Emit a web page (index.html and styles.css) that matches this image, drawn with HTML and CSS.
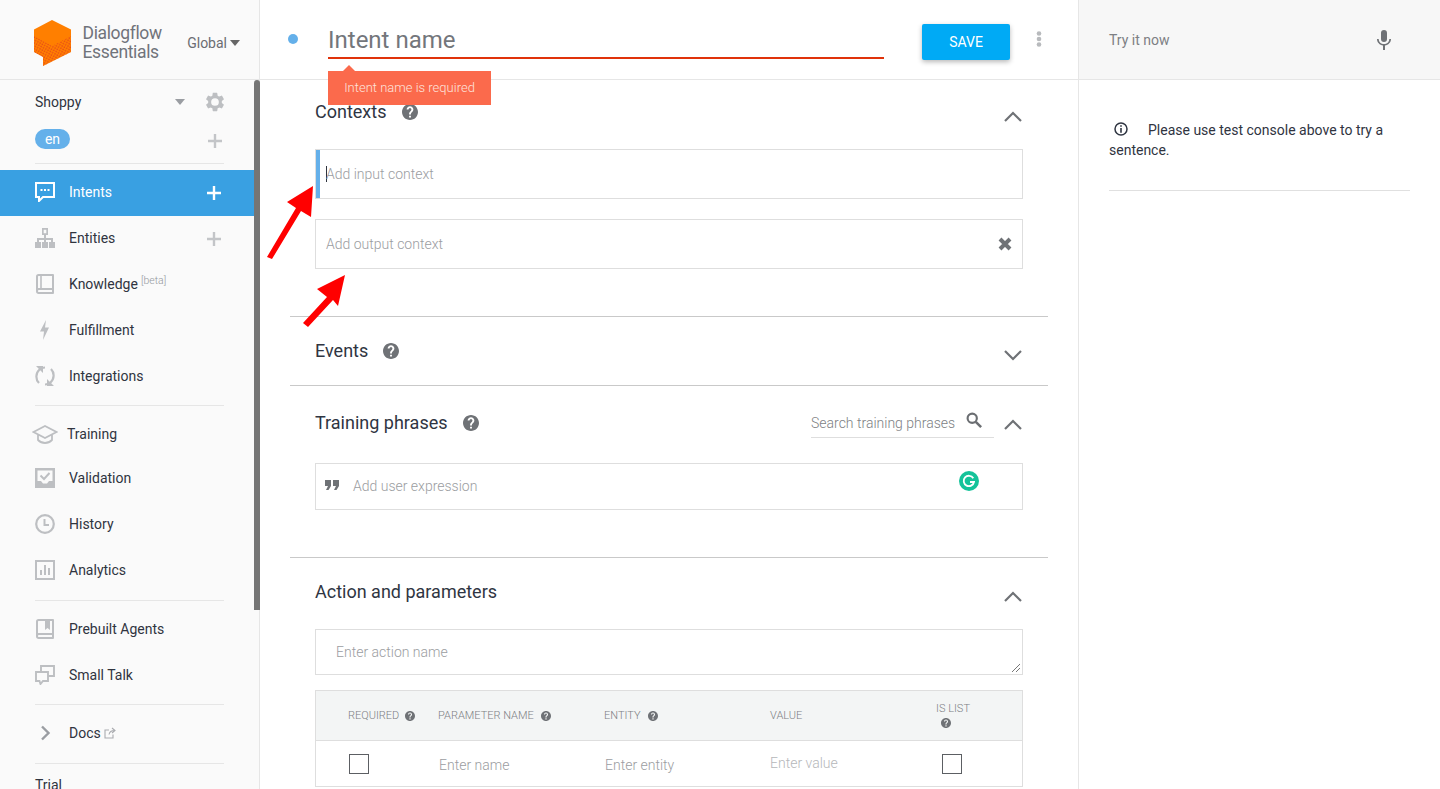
FILE: index.html
```html
<!DOCTYPE html>
<html lang="en">
<head>
<meta charset="utf-8">
<title>Dialogflow Essentials</title>
<link rel="stylesheet" href="styles.css">
</head>
<body>
<svg class="defs" width="0" height="0" aria-hidden="true">
  <defs>
    <symbol id="help" viewBox="2 2 20 20"><path d="M12 2C6.48 2 2 6.48 2 12s4.48 10 10 10 10-4.48 10-10S17.52 2 12 2zm1.2 17h-2.4v-2.4h2.4V19zm2.07-7.75l-.9.92c-.92.73-1.17 1.33-1.17 2.83h-2.4v-.5c0-1.1.45-2.1 1.17-2.83l1.24-1.26c.37-.36.59-.86.59-1.41 0-1.1-.9-2-1.8-2s-1.8.9-1.8 2H7.8c0-2.21 1.99-4.2 4.2-4.2s4.2 1.99 4.2 4.2c0 .88-.36 1.68-.93 2.25z"/></symbol>
    <symbol id="chev-up" viewBox="0 0 18 11"><path d="M1 10l8-8 8 8" fill="none" stroke="currentColor" stroke-width="2.2"/></symbol>
    <symbol id="chev-down" viewBox="0 0 18 11"><path d="M1 1l8 8 8-8" fill="none" stroke="currentColor" stroke-width="2.2"/></symbol>
    <symbol id="plus" viewBox="0 0 14 14"><path d="M7 0v14M0 7h14" fill="none" stroke="currentColor" stroke-width="2.4"/></symbol>
    <pattern id="dots" width="2.6" height="2.6" patternUnits="userSpaceOnUse" patternTransform="rotate(28)"><circle cx="1" cy="1" r=".72" fill="#e2401c"/></pattern>
  </defs>
</svg>
<div class="app">
  <aside class="sidebar">
    <div class="brand">
      <svg class="logo" viewBox="34 20 37 46" width="37" height="46">
        <path d="M52 20l19 9.500V52L43 66v-9l-9-5V29.500z" fill="#ff7f00"/>
        <path d="M34 36l18 10 19-10v16L43 66v-9l-9-5z" fill="url(#dots)"/>
      </svg>
      <div class="brand-name">Dialogflow<br>Essentials</div>
      <div class="region">Global<span class="caret"></span></div>
    </div>
    <div class="side-scroll">
      <div class="agent-row"><span class="agent-name">Shoppy</span><span class="caret caret-light"></span>
        <svg class="gear" viewBox="0 0 24 24" width="22" height="22"><path fill="#bdbfc2" fill-rule="evenodd" d="M19.430 12.980c.04-.32.07-.64.07-.98s-.03-.66-.07-.98l2.110-1.650c.19-.15.24-.42.12-.64l-2-3.460c-.12-.22-.39-.3-.61-.22l-2.490 1c-.52-.4-1.080-.73-1.690-.98l-.38-2.650A.488.488 0 0 0 14 2h-4c-.25 0-.46.18-.49.420l-.38 2.650c-.61.25-1.170.59-1.690.98l-2.490-1c-.23-.09-.49 0-.61.22l-2 3.460c-.13.22-.07.49.12.64l2.110 1.650c-.04.32-.07.65-.07.98s.03.66.07.98l-2.110 1.650c-.19.15-.24.42-.12.64l2 3.460c.12.22.39.3.61.22l2.490-1c.52.4 1.080.73 1.690.98l.38 2.650c.03.24.24.42.49.42h4c.25 0 .46-.18.49-.42l.38-2.650c.61-.25 1.170-.59 1.690-.98l2.490 1c.23.09.49 0 .61-.22l2-3.460c.12-.22.07-.49-.12-.64l-2.110-1.650zM12 16.200a4.200 4.200 0 1 1 0-8.400 4.200 4.200 0 0 1 0 8.400z"/></svg>
      </div>
      <div class="lang-row"><span class="lang-pill">en</span><svg class="plus plus-lang"><use href="#plus"/></svg></div>
      <div class="rule rule-top"></div>

      <div class="nav-item active">
        <svg class="nav-icon" viewBox="0 0 20 20"><path d="M1 1h18v14H8l-4 4v-4H1z" fill="none" stroke="#fff" stroke-width="2"/><path d="M5.500 7h2v2h-2zM9 7h2v2H9zM12.500 7h2v2h-2z" fill="#fff"/></svg>
        <span>Intents</span><svg class="plus"><use href="#plus"/></svg>
      </div>
      <div class="nav-item">
        <svg class="nav-icon" viewBox="0 0 20 20"><path fill="#bdbfc2" fill-rule="evenodd" d="M7 0h6v7h-2v3h7v4h2v6h-6v-6h2v-2h-5v2h2v6H7v-6h2v-2H4v2h2v6H0v-6h2v-4h7V7H7zM8.700 1.700v3.600h2.600V1.700z"/></svg>
        <span>Entities</span><svg class="plus"><use href="#plus"/></svg>
      </div>
      <div class="nav-item">
        <svg class="nav-icon" viewBox="0 0 20 20"><path fill="none" stroke="#bdbfc2" stroke-width="2" stroke-linejoin="round" d="M2 17V2.500C2 1.700 2.700 1 3.500 1H18v18H3.500C2.700 19 2 18.300 2 17.500S2.700 15 3.500 15H18"/><path fill="none" stroke="#bdbfc2" stroke-width="1.600" d="M6 1v14"/></svg>
        <span>Knowledge<sup class="beta">[beta]</sup></span>
      </div>
      <div class="nav-item">
        <svg class="nav-icon" viewBox="0 0 20 20"><path fill="#bdbfc2" d="M11 0L5 11.500h4L8 20l6-12.500h-4z"/></svg>
        <span>Fulfillment</span>
      </div>
      <div class="nav-item">
        <svg class="nav-icon" viewBox="0 0 20 20"><path fill="none" stroke="#bdbfc2" stroke-width="2.200" d="M4 17C.5 13.500.300 7.500 4.500 3.500 6 2 8 1.500 10 1.500M16 3c3.500 3.500 3.700 9.500-.5 13.500-1.500 1.500-3.500 2-5.500 2"/><path fill="#bdbfc2" d="M1 0h7v7zM19 20h-7v-7z"/></svg>
        <span>Integrations</span>
      </div>
      <div class="rule rule-a"></div>
      <div class="nav-item nav-tight nav-training">
        <svg class="nav-icon icon-wide" viewBox="0 0 26 20"><path fill="none" stroke="#bdbfc2" stroke-width="1.800" d="M1.500 8L13 2l11.500 6L13 14zM6 11v5c2 2 4.500 3 7 3s5-1 7-3v-5"/></svg>
        <span>Training</span>
      </div>
      <div class="nav-item">
        <svg class="nav-icon" viewBox="0 0 20 20"><path fill="#bdbfc2" d="M0 0h20v20H0zM2.500 2.500V13H6l2 2.500h4l2-2.500h3.500V2.500z"/><path fill="none" stroke="#bdbfc2" stroke-width="2" d="M5.500 7.500L9 11l5.500-6"/></svg>
        <span>Validation</span>
      </div>
      <div class="nav-item">
        <svg class="nav-icon" viewBox="0 0 20 20"><circle cx="10" cy="10" r="8.800" fill="none" stroke="#bdbfc2" stroke-width="2.200"/><path fill="none" stroke="#bdbfc2" stroke-width="2" d="M9.500 5v6H14"/></svg>
        <span>History</span>
      </div>
      <div class="nav-item">
        <svg class="nav-icon" viewBox="0 0 20 20"><path fill="none" stroke="#bdbfc2" stroke-width="2" d="M1 1h18v18H1z"/><path fill="#bdbfc2" d="M5 10h2v5H5zM9 5h2v10H9zM13 8h2v7h-2z"/></svg>
        <span>Analytics</span>
      </div>
      <div class="rule rule-b"></div>
      <div class="nav-item">
        <svg class="nav-icon" viewBox="0 0 20 20"><path fill="none" stroke="#bdbfc2" stroke-width="2" stroke-linejoin="round" d="M2 17V2.500C2 1.700 2.700 1 3.500 1H18v18H3.500C2.700 19 2 18.300 2 17.500S2.700 15 3.500 15H18"/><path fill="#bdbfc2" d="M10 1h5v10l-2.500-2L10 11z"/></svg>
        <span>Prebuilt Agents</span>
      </div>
      <div class="nav-item">
        <svg class="nav-icon" viewBox="0 0 20 20"><path fill="none" stroke="#bdbfc2" stroke-width="1.900" d="M1 7h12v9H8l-2.500 3-1-3H1zM6 7V1h13v10h-6"/></svg>
        <span>Small Talk</span>
      </div>
      <div class="rule rule-c"></div>
      <div class="nav-item">
        <svg class="nav-icon" viewBox="0 0 20 20"><path fill="none" stroke="#9a9da2" stroke-width="2.400" d="M7 3.500l6.500 6.500L7 16.500"/></svg>
        <span>Docs</span>
        <svg class="ext" viewBox="0 0 12 12" width="12" height="12"><path fill="none" stroke="#a9abaf" stroke-width="1.100" d="M9 7.500V11H1V3h4M5 7.500C5.500 5 7 3.500 10.500 3.500M8 1l3 2.500L8 6"/></svg>
      </div>
      <div class="rule rule-d"></div>
      <div class="trial">Trial</div>
      <div class="scrollbar"></div>
    </div>
  </aside>

  <main class="main">
    <header class="main-head">
      <span class="status-dot"></span>
      <div class="name-field"><span class="name-text">Intent name</span></div>
      <button class="save">SAVE</button>
      <svg class="kebab" viewBox="0 0 6 16" width="6" height="16"><circle cx="3" cy="2.500" r="2.300"/><circle cx="3" cy="8" r="2.300"/><circle cx="3" cy="13.500" r="2.300"/></svg>
      <div class="tooltip">Intent name is required</div>
    </header>

    <div class="sections">
      <section class="sec sec-contexts">
        <div class="sec-head">
          <h2 class="sec-title">Contexts</h2><svg class="help help-l"><use href="#help"/></svg>
          <svg class="chev"><use href="#chev-up"/></svg>
        </div>
        <div class="field field-ctx field-focus"><span class="caret-bar"></span><span class="ph">Add input context</span></div>
        <div class="field field-ctx"><span class="ph">Add output context</span>
          <svg class="clear" viewBox="0 0 14 14" width="14" height="14"><path d="M2 2l10 10M12 2L2 12" stroke="#6f7276" stroke-width="4" fill="none"/></svg>
        </div>
      </section>

      <section class="sec sec-events">
        <div class="sec-head">
          <h2 class="sec-title">Events</h2><svg class="help help-m"><use href="#help"/></svg>
          <svg class="chev"><use href="#chev-down"/></svg>
        </div>
      </section>

      <section class="sec sec-training">
        <div class="sec-head">
          <h2 class="sec-title">Training phrases</h2><svg class="help help-t"><use href="#help"/></svg>
          <div class="search"><span>Search training phrases</span>
            <svg viewBox="0 0 18 18" width="16" height="16"><circle cx="7" cy="7" r="5.200" fill="none" stroke="#6b6e72" stroke-width="2.400"/><path d="M11 11l6 6" stroke="#6b6e72" stroke-width="2.800"/></svg>
          </div>
          <svg class="chev chev-search"><use href="#chev-up"/></svg>
        </div>
        <div class="field field-expr">
          <svg class="quote" viewBox="0 0 14 10" width="14" height="10"><path fill="#6f7276" d="M0 0h6v6L3.500 10H1l2-4H0zM8 0h6v6l-2.500 4H9l2-4H8z"/></svg>
          <span class="ph">Add user expression</span>
          <svg class="grammarly" viewBox="0 0 20 20" width="20" height="20"><circle cx="10" cy="10" r="10" fill="#15c39a"/><path d="M14.300 7.200A5.200 5.200 0 1 0 15 11h-4" fill="none" stroke="#fff" stroke-width="1.800"/></svg>
        </div>
      </section>

      <section class="sec sec-action">
        <div class="sec-head">
          <h2 class="sec-title">Action and parameters</h2>
          <svg class="chev"><use href="#chev-up"/></svg>
        </div>
        <div class="field field-action"><span class="ph">Enter action name</span>
          <svg class="grip" viewBox="0 0 8 8" width="8" height="8"><path d="M0 8l8-8M4 8l4-4" stroke="#777" fill="none"/></svg>
        </div>
        <div class="ptable">
          <div class="prow phead">
            <div class="pcell pcell-first">REQUIRED<svg class="help help-s help-req"><use href="#help"/></svg></div>
            <div class="pcell">PARAMETER NAME<svg class="help help-s"><use href="#help"/></svg></div>
            <div class="pcell">ENTITY<svg class="help help-s"><use href="#help"/></svg></div>
            <div class="pcell">VALUE</div>
            <div class="pcell pcell-list"><span>IS LIST</span><svg class="help help-s help-below"><use href="#help"/></svg></div>
          </div>
          <div class="prow pbody">
            <div class="pcell pcell-first pcell-box"><span class="check"></span></div>
            <div class="pcell ph ph-cell">Enter name</div>
            <div class="pcell ph ph-cell">Enter entity</div>
            <div class="pcell ph ph-cell ph-value">Enter value</div>
            <div class="pcell pcell-check"><span class="check"></span></div>
          </div>
        </div>
      </section>
    </div>

    <svg class="arrows" viewBox="0 0 100 340" width="100" height="340">
      <path fill="#ff0000" d="M53 186L27 202l9 6L7 257l5 2 29-48 10 6zM85 275l-28 14 10 8-24 26 5 4 25-27 5 6z"/>
    </svg>
  </main>

  <aside class="console">
    <div class="console-head"><span>Try it now</span>
      <svg viewBox="0 0 14 20" width="14" height="20"><path fill="#6f7276" d="M7 0a3 3 0 0 1 3 3v6a3 3 0 0 1-6 0V3a3 3 0 0 1 3-3zM0 9h1.700c0 3 2.400 5 5.300 5s5.300-2 5.300-5H14c0 3.400-2.700 6.100-6 6.500V20H6v-4.500C2.700 15.100 0 12.400 0 9z"/></svg>
    </div>
    <div class="console-body">
      <p class="console-msg"><svg class="info" viewBox="0 0 14 14" width="14" height="14"><circle cx="7" cy="7" r="6" fill="none" stroke="#2f3542" stroke-width="1.500"/><path d="M6.200 3.200h1.600v1.600H6.200zM6.200 6h1.600v4.800H6.200z" fill="#2f3542"/></svg>Please use test console above to try a sentence.</p>
    </div>
  </aside>
</div>
</body>
</html>
```

FILE: styles.css
```css
* { box-sizing: border-box; }
html, body { margin: 0; height: 100%; overflow: hidden; }
body { font-family: Roboto, "Liberation Sans", sans-serif; font-size: 14px; color: #30343f; background: #fff; }
.defs { position: absolute; }
.app { display: flex; height: 789px; overflow: hidden; }

/* sidebar */
.sidebar { width: 260px; flex: none; background: #fafafa; border-right: 1px solid #e6e6e6; display: flex; flex-direction: column; }
.brand { height: 80px; flex: none; display: flex; align-items: center; padding: 0 19px 0 34px; border-bottom: 1px solid #e6e6e6; }
.logo { flex: none; margin-top: 7px; }
.brand-name { margin-left: 11.500px; font-size: 17.500px; line-height: 19px; letter-spacing: -.35px; color: #70737a; flex: 1; margin-top: 7px; }
.region { font-size: 14px; color: #6b6d72; display: flex; align-items: center; gap: 3px; margin-top: 6px; }
.caret { width: 0; height: 0; border-left: 5.500px solid transparent; border-right: 5.500px solid transparent; border-top: 6px solid #666; display: inline-block; }
.caret-light { border-top-color: #9a9da2; border-left-width: 5.500px; border-right-width: 5.500px; margin-left: auto; }
.side-scroll { position: relative; flex: 1; min-height: 0; overflow: hidden; margin-right: -1px; }
.agent-row { display: flex; align-items: center; height: 44px; padding: 0 34px 0 35px; }
.agent-name { font-size: 14px; color: #30343f; }
.gear { margin-left: 19px; }
.lang-row { display: flex; align-items: center; justify-content: space-between; height: 28px; padding: 0 38px 0 35px; margin-top: 2px; }
.lang-pill { width: 35px; height: 20px; border-radius: 10px; background: #64b0ea; color: #fff; font-size: 14px; line-height: 20px; text-align: center; margin-top: -2px; }
.plus { width: 14px; height: 14px; color: #c3c5c8; flex: none; margin-left: auto; margin-top: 2px; }
.plus-lang { margin-left: 0; }
.rule { height: 1px; background: #e6e6e6; margin-left: 35px; margin-right: 36px; }
.rule-top { margin-top: 9px; margin-bottom: 6px; }
.nav-item { display: flex; align-items: center; height: 46px; padding: 0 39px 2px 35px; color: #30343f; }
.nav-icon { width: 20px; height: 20px; flex: none; margin-right: 14px; }
.icon-wide { width: 26px; margin-left: -3px; margin-right: 9px; }
.nav-item.active { background: #39a0e2; color: #fff; }
.nav-item.active .plus { color: #fff; }
.beta { font-size: 10.500px; font-weight: 300; color: #94979c; margin-left: 3px; position: relative; top: -5px; vertical-align: baseline; }
.ext { margin-left: 3px; }
.nav-tight { height: 43px; }
.rule-a { margin-top: 5px; margin-bottom: 7px; }
.rule-b { margin-top: 6px; margin-bottom: 6px; }
.rule-c { margin-top: 5px; margin-bottom: 6px; }
.rule-d { margin-top: 6px; }
.trial { padding: 13px 0 0 35px; font-size: 14px; }
.scrollbar { position: absolute; top: 0; right: 0; width: 6px; height: 530px; background: #757575; border-radius: 3px 3px 0 0; }

/* main */
.main { position: relative; width: 818px; flex: none; }
.main-head { position: relative; height: 80px; border-bottom: 1px solid #e6e6e6; display: flex; align-items: center; padding-left: 28px; }
.status-dot { width: 10px; height: 10px; border-radius: 50%; background: #64b0ea; flex: none; margin-top: -2px; }
.name-field { width: 556px; height: 40px; margin-left: 30px; border-bottom: 2px solid #e0320a; margin-top: -2px; flex: none; }
.name-text { display: block; font-size: 24px; line-height: 36px; padding-top: 3px; color: #73767b; }
.save { width: 88px; height: 36px; margin-left: 38px; border: 0; border-radius: 2px; background: #00aaf5; color: #fff; font: 14px Roboto, sans-serif; box-shadow: 0 2px 5px rgba(0,0,0,.28); margin-top: 4px; }
.kebab { fill: #b8babd; margin-left: 26px; margin-top: -2px; }
.tooltip { position: absolute; left: 68px; top: 71px; width: 163px; height: 34px; background: #fb6a4c; color: #fde3dc; font-size: 13px; font-weight: 300; line-height: 34px; text-align: center; z-index: 2; }
.tooltip::before { content: ""; position: absolute; left: 15px; top: -6px; border-left: 6px solid transparent; border-right: 6px solid transparent; border-bottom: 6px solid #fb6a4c; }

.sections { margin: 0 30px; width: 758px; }
.sec { padding: 0 25px; border-bottom: 1px solid #c9c9c9; }
.sec-head { display: flex; align-items: center; height: 40px; }
.sec-title { margin: -2px 0 0; font-size: 18px; font-weight: 400; color: #2f3542; }
.help { fill: #6f7276; flex: none; }
.help-l { width: 16px; height: 16px; margin-left: 16px; margin-top: -1px; }
.help-m { width: 16px; height: 16px; margin-left: 15px; }
.help-t { width: 16px; height: 16px; margin-left: 15px; }
.help-s { width: 10px; height: 10px; margin-left: 7px; }
.help-req { margin-left: 6px; }
.chev { width: 18px; height: 11px; color: #6f7276; margin-left: auto; margin-right: 1px; margin-top: 8px; flex: none; }
.field { position: relative; display: flex; align-items: center; border: 1px solid #dedede; background: #fff; }
.ph { font-weight: 300; color: #9b9da1; font-size: 14px; }
.sec-contexts { padding-top: 12px; padding-bottom: 47px; }
.sec-contexts .sec-head { margin-bottom: 17px; }
.field-ctx { height: 50px; padding-left: 10px; }
.field-ctx + .field-ctx { margin-top: 20px; }
.field-focus::before { content: ""; position: absolute; left: 0; top: 0; bottom: 0; width: 4px; background: #64b0ea; }
.caret-bar { width: 1px; height: 16px; background: #30343f; margin-right: -1px; }
.clear { margin-left: auto; margin-right: 10px; }
.sec-events { height: 69px; padding-top: 14px; }
.sec-training { padding-top: 17px; padding-bottom: 47px; }
.sec-training .sec-head { margin-bottom: 20px; }
.search { margin-left: auto; width: 183px; height: 28px; display: flex; align-items: center; justify-content: space-between; border-bottom: 1px solid #dedede; padding-right: 12px; font-weight: 300; color: #7d7f84; margin-top: 1px; }
.search svg { margin-top: -7px; }
.chev-search { margin-left: 10px; margin-top: 2px; }
.field-expr { height: 47px; padding-left: 9px; padding-bottom: 2px; }
.quote { margin-right: 14px; flex: none; margin-top: -1px; }
.grammarly { position: absolute; right: 43px; top: 7px; }
.sec-action { padding-top: 14px; border-bottom: 0; }
.sec-action .sec-head { margin-bottom: 17px; }
.field-action { height: 46px; padding-left: 20px; margin-bottom: 15px; }
.grip { position: absolute; right: 2px; bottom: 2px; }
.ptable { border: 1px solid #dedede; border-top-width: 1px; }
.prow { display: grid; grid-template-columns: 122px 166px 166px 166px 1fr; }
.phead { height: 50px; background: #f3f5f5; border-bottom: 1px solid #dedede; align-items: center; }
.pcell { display: flex; align-items: center; font-size: 11px; font-weight: 300; color: #7d7f84; }
.pcell-first { padding-left: 32px; }
.pcell-box { padding-left: 33px; }
.pcell-list { flex-direction: column; align-items: flex-start; gap: 3px; margin-top: -2px; }
.help-below { margin-left: 5px; }
.pbody { height: 45px; padding-top: 1px; align-items: center; }
.ph-cell { font-size: 14px; color: #9b9da1; padding-left: 1px; padding-top: 1px; }
.ph-value { padding-left: 0; padding-top: 0; margin-top: -2px; color: #b5b7ba; }
.pcell-check { padding-left: 6px; }
.check { width: 20px; height: 20px; border: 1px solid #5c5f63; display: block; background: #fff; }
.arrows { position: absolute; left: 0; top: 0; z-index: 3; pointer-events: none; }

/* console */
.console { flex: 1; border-left: 1px solid #e6e6e6; }
.console-head { height: 80px; background: #f7f7f7; border-bottom: 1px solid #e6e6e6; display: flex; align-items: center; justify-content: space-between; padding: 0 49px 0 30px; color: #7d7f84; font-weight: 400; }
.console-head svg { margin-top: 1px; }
.console-body { margin: 0 30px; height: 111px; padding-top: 40px; border-bottom: 1px solid #e0e0e0; }
.console-msg { margin: 0; line-height: 20px; color: #30343f; }
.info { margin-left: 5px; margin-right: 20px; vertical-align: -1px; }
```
